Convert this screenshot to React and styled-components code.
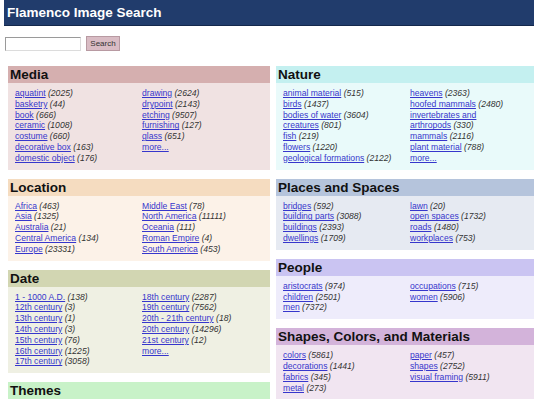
import React from "react";
import styled, { createGlobalStyle } from "styled-components";

const GlobalStyle = createGlobalStyle`
  body {
    margin: 0;
    background: #ffffff;
    font-family: "Liberation Sans", Arial, sans-serif;
    overflow: hidden;
  }
`;

const left = [
  {
    title: "Media",
    head: "#d5afaf",
    body: "#f0e2e2",
    cols: [
      [
        ["aquatint", "2025"],
        ["basketry", "44"],
        ["book", "666"],
        ["ceramic", "1008"],
        ["costume", "660"],
        ["decorative box", "163"],
        ["domestic object", "176"],
      ],
      [
        ["drawing", "2624"],
        ["drypoint", "2143"],
        ["etching", "9507"],
        ["furnishing", "127"],
        ["glass", "651"],
        ["more..."],
      ],
    ],
  },
  {
    title: "Location",
    head: "#f5dcc0",
    body: "#fcf2e8",
    cols: [
      [
        ["Africa", "463"],
        ["Asia", "1325"],
        ["Australia", "21"],
        ["Central America", "134"],
        ["Europe", "23331"],
      ],
      [
        ["Middle East", "78"],
        ["North America", "11111"],
        ["Oceania", "111"],
        ["Roman Empire", "4"],
        ["South America", "453"],
      ],
    ],
  },
  {
    title: "Date",
    head: "#d2d6b2",
    body: "#eff0e3",
    cols: [
      [
        ["1 - 1000 A.D.", "138"],
        ["12th century", "3"],
        ["13th century", "1"],
        ["14th century", "3"],
        ["15th century", "76"],
        ["16th century", "1225"],
        ["17th century", "3058"],
      ],
      [
        ["18th century", "2287"],
        ["19th century", "7562"],
        ["20th - 21th century", "18"],
        ["20th century", "14296"],
        ["21st century", "12"],
        ["more..."],
      ],
    ],
  },
  {
    title: "Themes",
    head: "#c8f2c8",
    body: "#eafbea",
    cols: [[], []],
  },
];

const right = [
  {
    title: "Nature",
    head: "#c4f0f0",
    body: "#e9fafa",
    cols: [
      [
        ["animal material", "515"],
        ["birds", "1437"],
        ["bodies of water", "3604"],
        ["creatures", "801"],
        ["fish", "219"],
        ["flowers", "1220"],
        ["geological formations", "2122"],
      ],
      [
        ["heavens", "2363"],
        ["hoofed mammals", "2480"],
        ["invertebrates and"],
        ["arthropods", "330"],
        ["mammals", "2116"],
        ["plant material", "788"],
        ["more..."],
      ],
    ],
  },
  {
    title: "Places and Spaces",
    head: "#b5c4dc",
    body: "#e6eaf2",
    cols: [
      [
        ["bridges", "592"],
        ["building parts", "3088"],
        ["buildings", "2393"],
        ["dwellings", "1709"],
      ],
      [
        ["lawn", "20"],
        ["open spaces", "1732"],
        ["roads", "1480"],
        ["workplaces", "753"],
      ],
    ],
  },
  {
    title: "People",
    head: "#cac4f2",
    body: "#eeecfb",
    cols: [
      [
        ["aristocrats", "974"],
        ["children", "2501"],
        ["men", "7372"],
      ],
      [
        ["occupations", "715"],
        ["women", "5906"],
      ],
    ],
  },
  {
    title: "Shapes, Colors, and Materials",
    head: "#d3b3da",
    body: "#f1e5f1",
    cols: [
      [
        ["colors", "5861"],
        ["decorations", "1441"],
        ["fabrics", "345"],
        ["metal", "273"],
      ],
      [
        ["paper", "457"],
        ["shapes", "2752"],
        ["visual framing", "5911"],
      ],
    ],
  },
];

function Panel({ panel }) {
  return (
    <Box $bg={panel.body}>
      <Head $bg={panel.head}>{panel.title}</Head>
      {panel.cols[0].length > 0 && (
        <Body>
          {panel.cols.map((col, i) => (
            <List key={i}>
              {col.map(([name, count]) => (
                <Item key={name}>
                  <Link href="#">{name}</Link>
                  {count && <Count> ({count})</Count>}
                </Item>
              ))}
            </List>
          ))}
        </Body>
      )}
    </Box>
  );
}

export default function App() {
  return (
    <Page>
      <GlobalStyle />
      <TitleBar>Flamenco Image Search</TitleBar>
      <SearchRow>
        <SearchInput type="text" />
        <SearchButton>Search</SearchButton>
      </SearchRow>
      <Columns>
        <Column>
          {left.map((p) => (
            <Panel key={p.title} panel={p} />
          ))}
        </Column>
        <Column>
          {right.map((p) => (
            <Panel key={p.title} panel={p} />
          ))}
        </Column>
      </Columns>
    </Page>
  );
}

const Page = styled.div`
  box-sizing: border-box;
  padding-left: 4px;
  width: 100%;
  height: 400px;
  overflow: hidden;
`;

const TitleBar = styled.div`
  height: 25px;
  line-height: 26px;
  background: #213c6c;
  border-bottom: 1px solid #14284c;
  color: #ffffff;
  font-size: 13.5px;
  font-weight: bold;
  padding-left: 3px;
`;

const SearchRow = styled.div`
  display: flex;
  align-items: center;
  gap: 5px;
  margin-top: 10px;
  padding-left: 1px;
`;

const SearchInput = styled.input`
  box-sizing: border-box;
  width: 76px;
  height: 14px;
  padding: 0;
  border: 1px solid #9a9a9a;
  border-right-color: #dcdcdc;
  border-bottom-color: #dcdcdc;
  background: #ffffff;
`;

const SearchButton = styled.button`
  box-sizing: border-box;
  width: 34px;
  height: 15px;
  padding: 0;
  border: 1px solid #b89aa2;
  background: #d9bcc4;
  color: #333333;
  font-family: "Liberation Sans", Arial, sans-serif;
  font-size: 8px;
`;

const Columns = styled.div`
  display: grid;
  grid-template-columns: 262px 262px;
  column-gap: 6px;
  margin-top: 15px;
  padding-left: 4px;
`;

const Column = styled.div`
  display: flex;
  flex-direction: column;
  gap: 9px;
`;

const Box = styled.div`
  background: ${(p) => p.$bg};
`;

const Head = styled.div`
  height: 17px;
  line-height: 18px;
  background: ${(p) => p.$bg};
  padding-left: 2px;
  font-size: 13.5px;
  font-weight: bold;
  color: #111111;
  white-space: nowrap;
`;

const Body = styled.div`
  display: grid;
  grid-template-columns: 127px 1fr;
  padding: 5px 7px 6px;
`;

const List = styled.div`
  display: flex;
  flex-direction: column;
`;

const Item = styled.div`
  font-size: 8.6px;
  line-height: 10.8px;
  white-space: nowrap;
`;

const Link = styled.a`
  color: #3636cc;
  text-decoration: underline;
`;

const Count = styled.span`
  color: #333333;
  font-style: italic;
`;
